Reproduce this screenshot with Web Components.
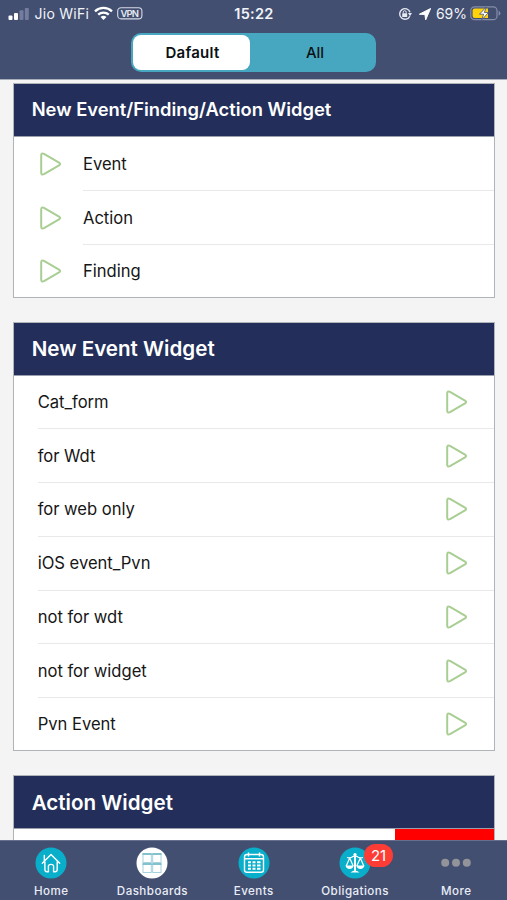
<!DOCTYPE html>
<html lang="en">
<head>
<meta charset="utf-8">
<title>Dashboards</title>
<style>
html,body{margin:0;height:100%;overflow:hidden}
body{font-family:Inter,"Liberation Sans",sans-serif;background:#f4f4f4;color:#161616}
</style>
</head>
<body>
<dash-app></dash-app>
<script>
const define = (name, html, setup) => customElements.define(name, class extends HTMLElement {
  connectedCallback() {
    if (this.shadowRoot) return;
    const root = this.attachShadow({mode: 'open'});
    root.innerHTML = html;
    if (setup) setup(this, root);
  }
});

define('status-bar', `
<style>
:host{display:grid;grid-template-columns:1fr auto 1fr;align-items:center;height:27px;padding:0 6px 0 7px;color:#f2f4fa;font-size:14px;box-sizing:border-box}
div{display:flex;align-items:center}
svg{display:block;flex:none}
.right{justify-content:flex-end}
.time{font-weight:600;font-size:14.5px;letter-spacing:.3px}
</style>
<div>
<svg width="22" height="14" viewBox="0 0 22 14"><g fill="#fff"><rect x="1.500" y="8.500" width="4" height="4.500" rx="1"/><rect x="7" y="6" width="4" height="7" rx="1"/></g><g fill="#747d9d"><rect x="12.500" y="3.300" width="4" height="9.700" rx="1"/><rect x="17.800" y="1" width="4" height="12" rx="1"/></g></svg>
<span style="margin-left:5.500px;letter-spacing:.25px">Jio WiFi</span>
<svg style="margin-left:5px" width="19" height="15" viewBox="0 0 19 15"><g fill="none" stroke="#fff" stroke-width="2.300"><path d="M1 5.400C5.800.8 13.200.8 18 5.400"/><path d="M4.200 8.700C7.200 5.900 11.800 5.900 14.800 8.700"/></g><path fill="#fff" d="M9.500 14L6.500 11Q9.500 8.400 12.500 11Z"/></svg>
<svg style="margin-left:4px" width="26" height="13" viewBox="0 0 26 13"><rect x=".7" y=".7" width="24.200" height="11.200" rx="3.400" fill="none" stroke="#d7dbe8" stroke-width="1.100"/><text x="12.800" y="9.800" text-anchor="middle" textLength="18.500" font-family="Inter" font-weight="600" font-size="9.500" fill="#e6e9f2">VPN</text></svg>
</div>
<div class="time">15:22</div>
<div class="right">
<svg width="14" height="14" viewBox="0 0 14 14"><path d="M11.800 9.200A5.300 5.300 0 1 1 12 5.200" fill="none" stroke="#e6e9f2" stroke-width="1.400"/><path d="M10 6h4l-2 3.200z" fill="#e6e9f2"/><rect x="4.200" y="6.300" width="5" height="3.700" rx=".6" fill="#e6e9f2"/><path d="M5.200 6.500V5.200a1.500 1.500 0 0 1 3 0v1.300" fill="none" stroke="#e6e9f2" stroke-width="1"/></svg>
<svg style="margin-left:7px" width="12" height="12" viewBox="0 0 12 12"><path d="M.4 6.200L11.600.5 6.700 11.800 5.900 6.500Z" fill="#fff" stroke="#fff" stroke-width="1" stroke-linejoin="round"/></svg>
<span style="margin-left:5px">69%</span>
<svg style="margin-left:3px" width="31" height="15" viewBox="0 0 31 15"><rect x=".8" y=".8" width="26.200" height="12.900" rx="3.800" fill="none" stroke="#858da9" stroke-width="1.200"/><path d="M28.600 4.700v5q1.800-.7 1.800-2.500t-1.800-2.500z" fill="#858da9"/><path d="M4.600 2.500H18v9.500H4.600q-2 0-2-2V4.500q0-2 2-2z" fill="#ffd20a"/><path d="M16.200 1L9.500 8.200h4.100L11.800 13.800 18.500 6.500h-4.100z" fill="#fff" stroke="#434f70" stroke-width=".8"/></svg>
</div>`);

define('segment-switch', `
<style>
:host{display:grid;grid-template-columns:117px 1fr;width:245px;height:39px;box-sizing:border-box;padding:2px;border-radius:10px;background:#47a7c0;color:#0b1013;font-size:15px}
span{display:flex;align-items:center;justify-content:center}
.on{background:#fff;border-radius:8px;font-weight:600;letter-spacing:.25px;padding-left:2px;box-sizing:border-box}
.off{font-weight:500;padding-left:6px}
</style><span class="on">Dafault</span><span class="off">All</span>`);

define('play-icon', `
<style>:host{display:block;width:22px;height:24px}svg{display:block}</style>
<svg width="22" height="24" viewBox="0 0 22 24"><path d="M1.200 3.500Q1.200 .700 4 1.900L19 10.700Q21.200 12 19 13.300L4 22.100Q1.200 23.300 1.200 20.500Z" fill="none" stroke="#a9ce93" stroke-width="2" stroke-linejoin="round"/></svg>`);

define('widget-row', `
<style>
:host{display:grid;grid-template-columns:1fr 22px;align-items:center;height:53.750px;box-sizing:border-box;margin-left:23.700px;padding-right:26px;border-bottom:1px solid #e9e9eb;font-size:16.600px;letter-spacing:-.03px}
:host(:last-of-type){border-bottom:0;height:52px}
:host([lead]){display:flex;margin-left:69px;padding:1px 0 0}
:host([lead]) play-icon{margin-left:-43px;margin-right:21px;order:0}
:host([lead]) .t{order:1}
</style><span class="t"><slot></slot></span><play-icon></play-icon>`);

define('widget-card', `
<style>
:host{display:block;border:1px solid #b0b3b8;background:#fff;box-sizing:border-box;margin-bottom:24px}
header{height:53px;box-sizing:border-box;background:#232f5a;border-bottom:1px solid #9a9fae;color:#fff;font-weight:600;font-size:var(--title,20.600px);display:flex;align-items:center;padding:0 0 var(--lift,0) 17.700px}
</style><header></header><slot></slot>`, (el, root) => {
  root.querySelector('header').textContent = el.getAttribute('heading');
});

const glyphs = {
home: `<circle cx="16" cy="16" r="15.500" fill="#09aeca"/><path d="M7.300 16.200L16 7.500 24.700 16.200M9.300 14.500V8.500M9.900 15V22.500Q9.900 24.700 12 24.700H13.400V19.300Q13.400 17.400 16 17.400T18.600 19.300V24.700H20Q22.200 24.700 22.200 22.500V15" fill="none" stroke="#fff" stroke-width="1.400" stroke-linecap="round" stroke-linejoin="round"/>`,
dash: `<circle cx="16" cy="16" r="15.500" fill="#fff"/><g fill="none" stroke="#a6d2db" stroke-width="1"><rect x="7" y="7" width="8.300" height="8.500"/><rect x="16.700" y="7" width="8.300" height="8.500"/><rect x="7" y="17" width="8.300" height="8.500"/><rect x="16.700" y="17" width="8.300" height="8.500"/></g><path d="M6.500 7H15.700M16.300 7H25.500M6.500 17H15.700M16.300 17H25.500" stroke="#68b5c4" stroke-width="1.500"/>`,
cal: `<circle cx="16" cy="16" r="15.500" fill="#09aeca"/><g fill="none" stroke="#fff"><path d="M9 7.500H23Q25.500 7.500 25.500 10V23Q25.500 25.300 23 25.300H9Q6.500 25.300 6.500 23V10Q6.500 7.500 9 7.500ZM6.500 11.700H25.500M10.500 5.500V9.500M21.500 5.500V9.500" stroke-width="1.400"/><path d="M10 15.200H13M14.500 15.200H17.500M19 15.200H22.500M10 18.500H13M14.500 18.500H17.500M19 18.500H22.500M10 21.800H13M14.500 21.800H17.500M19 21.800H22.500" stroke-width="2"/></g>`,
law: `<circle cx="16" cy="16" r="15.500" fill="#09aeca"/><g fill="none" stroke="#fff" stroke-width="1.200" stroke-linejoin="round"><path d="M8 10.500Q11.500 11.500 14 9.500 16 8.300 18 9.500 20.500 11.500 24 10.500M10.700 11L7.200 19M10.700 11L14.200 19M21.300 11L17.800 19M21.300 11L24.800 19"/><path d="M16 7V24.500" stroke-width="1.900"/></g><path d="M6.500 18.600H14.700Q14 22 10.600 22T6.500 18.600M17.300 18.600H25.500Q24.700 22 21.400 22T17.300 18.600M11.500 25.500Q13 23.800 16 23.500 19 23.800 20.500 25.500Z" fill="#fff"/><circle cx="16" cy="7.500" r="1.600" fill="#fff"/>`,
more: `<g fill="#92949a"><circle cx="5.200" cy="15.700" r="4"/><circle cx="16" cy="15.700" r="4"/><circle cx="26.800" cy="15.700" r="4"/></g>`
};
define('tab-item', `
<style>
:host{display:flex;flex-direction:column;align-items:center;flex:1 1 0;min-width:0;padding-top:6px;color:#e9edf7;font-size:11.600px;font-weight:500;letter-spacing:.45px;line-height:14px}
.pic{position:relative;height:32px;width:32px;margin-bottom:5px}
svg{display:block}
b{position:absolute;left:25px;top:-3.500px;width:29px;height:23px;border-radius:12px;background:#fd3d35;color:#fff;font-weight:400;font-size:15px;line-height:23px;text-align:center}
b{letter-spacing:0}
</style><div class="pic"><svg width="32" height="32" viewBox="0 0 32 32"></svg></div><slot></slot>`, (el, root) => {
  root.querySelector('svg').innerHTML = glyphs[el.getAttribute('icon')];
  const n = el.getAttribute('badge');
  if (n) {
    const b = document.createElement('b');
    b.textContent = n;
    root.querySelector('.pic').append(b);
  }
});

define('dash-app', `
<style>
:host{display:grid;grid-template-rows:79px 1fr 60px;height:900px;width:507px;overflow:hidden}
.top{background:#434f70;display:flex;flex-direction:column;align-items:center}
status-bar{align-self:stretch}
segment-switch{margin-top:6px}
main{overflow:hidden;padding:3px 12.500px 0 13px;border-top:1px solid #a8aebb;box-sizing:border-box;background:#f4f4f4}
.red{display:flex;justify-content:flex-end;height:54px}
.red i{width:99px;background:#fe0000}
nav{background:#434f70;display:flex;border-top:1px solid #66708c;box-sizing:border-box;padding-left:.5px}
</style>
<div class="top"><status-bar></status-bar><segment-switch></segment-switch></div>
<main>
<widget-card heading="New Event/Finding/Action Widget" style="--title:18.350px;--lift:2px"><widget-row lead>Event</widget-row><widget-row lead>Action</widget-row><widget-row lead>Finding</widget-row></widget-card>
<widget-card heading="New Event Widget"><widget-row>Cat_form</widget-row><widget-row>for Wdt</widget-row><widget-row>for web only</widget-row><widget-row>iOS event_Pvn</widget-row><widget-row>not for wdt</widget-row><widget-row>not for widget</widget-row><widget-row>Pvn Event</widget-row></widget-card>
<widget-card heading="Action Widget"><div class="red"><i></i></div></widget-card>
</main>
<nav><tab-item icon="home">Home</tab-item><tab-item icon="dash">Dashboards</tab-item><tab-item icon="cal">Events</tab-item><tab-item icon="law" badge="21">Obligations</tab-item><tab-item icon="more">More</tab-item></nav>`);
</script>
</body>
</html>
